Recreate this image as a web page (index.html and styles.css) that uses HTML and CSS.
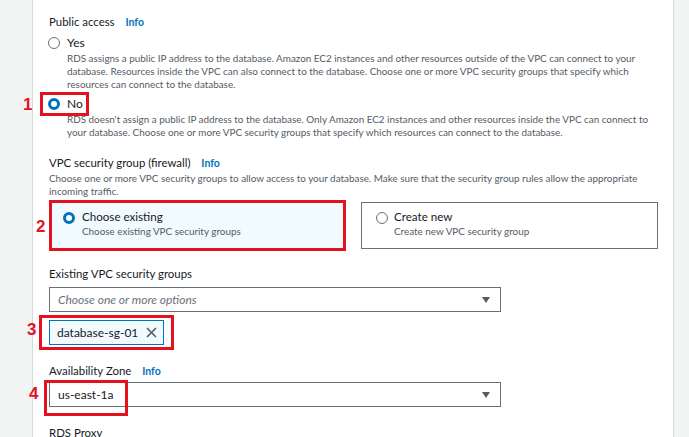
FILE: index.html
```html
<!DOCTYPE html>
<html>
<head>
<meta charset="utf-8">
<link rel="stylesheet" href="styles.css">
</head>
<body>
<div class="page">
  <div class="side-left"></div>
  <main class="panel">
    <section class="field">
      <div class="label">Public access <span class="info">Info</span></div>
      <div class="option option-yes">
        <span class="radio"></span>
        <div class="opt-body">
          <div class="opt-title">Yes</div>
          <div class="desc">
            <span class="line">RDS assigns a public IP address to the database. Amazon EC2 instances and other resources outside of the VPC can connect to your</span>
            <span class="line">database. Resources inside the VPC can also connect to the database. Choose one or more VPC security groups that specify which</span>
            <span class="line">resources can connect to the database.</span>
          </div>
        </div>
      </div>
      <div class="option option-no">
        <span class="anno anno-1">1</span>
        <span class="mark-no"></span>
        <span class="radio checked"></span>
        <div class="opt-body">
          <div class="opt-title">No</div>
          <div class="desc">
            <span class="line">RDS doesn't assign a public IP address to the database. Only Amazon EC2 instances and other resources inside the VPC can connect to</span>
            <span class="line">your database. Choose one or more VPC security groups that specify which resources can connect to the database.</span>
          </div>
        </div>
      </div>
    </section>

    <section class="field field-vpc">
      <div class="label">VPC security group (firewall) <span class="info">Info</span></div>
      <div class="desc field-desc">
        <span class="line">Choose one or more VPC security groups to allow access to your database. Make sure that the security group rules allow the appropriate</span>
        <span class="line">incoming traffic.</span>
      </div>
      <div class="cards">
        <div class="card card-selected">
          <span class="anno anno-2">2</span>
          <span class="radio checked"></span>
          <div class="opt-body">
            <div class="card-title">Choose existing</div>
            <div class="card-sub">Choose existing VPC security groups</div>
          </div>
        </div>
        <div class="card">
          <span class="radio"></span>
          <div class="opt-body">
            <div class="card-title">Create new</div>
            <div class="card-sub">Create new VPC security group</div>
          </div>
        </div>
      </div>
    </section>

    <section class="field field-existing">
      <div class="label">Existing VPC security groups</div>
      <div class="select">
        <span class="placeholder">Choose one or more options</span>
        <span class="caret"></span>
      </div>
      <div class="token-row">
        <span class="anno anno-3">3</span>
        <div class="token">
          <span class="token-text">database-sg-01</span>
          <svg class="token-x" width="11" height="11" viewBox="0 0 11 11"><path d="M1 1 L10 10 M10 1 L1 10" stroke="#545b64" stroke-width="1.6" fill="none"/></svg>
        </div>
      </div>
    </section>

    <section class="field field-az">
      <div class="label">Availability Zone <span class="info">Info</span></div>
      <div class="select select-az">
        <span class="anno anno-4">4</span>
        <span class="value">us-east-1a</span>
        <span class="caret"></span>
      </div>
    </section>

    <section class="field field-proxy">
      <div class="label">RDS Proxy</div>
    </section>
  </main>
  <div class="side-right"></div>
</div>
</body>
</html>
```

FILE: styles.css
```css
* { box-sizing: border-box; }
html, body { margin: 0; padding: 0; }
body {
  width: 689px;
  height: 437px;
  overflow: hidden;
  background: #ffffff;
  font-family: "Lato", "Open Sans", sans-serif;
  color: #16191f;
}
.page {
  display: flex;
  height: 437px;
}
.side-left {
  width: 33px;
  flex: none;
  background: #f2f3f3;
  border-right: 1px solid #d5dbdb;
}
.side-right {
  width: 16px;
  flex: none;
  background: #f2f3f3;
  border-left: 1px solid #d5dbdb;
}
.panel {
  flex: 1;
  padding: 14px 0 0 16px;
  position: relative;
}
.label {
  font-size: 11.4px;
  line-height: 16px;
  color: #16191f;
}
.info {
  color: #0073bb;
  font-weight: 700;
  font-size: 10.5px;
  margin-left: 8px;
}
.desc {
  font-size: 9.9px;
  line-height: 13px;
  color: #545b64;
}
.line { display: block; white-space: nowrap; }

.option {
  display: flex;
  align-items: flex-start;
  position: relative;
}
.option-yes { margin-top: 5px; }
.option-no { margin-top: 5px; }
.radio {
  width: 12px;
  height: 12px;
  flex: none;
  border: 1.5px solid #687078;
  border-radius: 50%;
  margin: 2px 7px 0 -1px;
  background: #fff;
}
.radio.checked {
  border: 3.5px solid #0073bb;
  background: #fff;
}
.opt-title {
  font-size: 12px;
  line-height: 16px;
}
.option .desc { margin-top: 1px; }

.anno {
  position: absolute;
  color: #e3121e;
  font-family: "Liberation Sans", sans-serif;
  font-weight: 700;
  font-size: 17px;
  line-height: 17px;
}
.anno-1 { left: -26px; top: 0px; }
.mark-no {
  position: absolute;
  left: -9px;
  top: -4px;
  width: 49px;
  height: 24px;
  border: 3px solid #e3121e;
}

.field-vpc { margin-top: 16px; }
.field-desc { margin-top: 1px; }
.cards {
  display: flex;
  align-items: center;
  gap: 15px;
  margin-top: 2px;
}
.card {
  position: relative;
  display: flex;
  align-items: flex-start;
  width: 297px;
  height: 47px;
  border: 1px solid #687078;
  padding: 6px 14px;
}
.card .radio { margin: 3px 6px 0 0; }
.card-selected {
  width: 297px;
  height: 51px;
  border: 3px solid #e3121e;
  background: #f1faff;
  padding: 6px 11px;
}
.card-selected .radio { margin-right: 7px; }
.anno-2 { left: -16px; top: 15px; }
.card-title {
  font-size: 11.6px;
  line-height: 16px;
  color: #16191f;
}
.card-sub {
  font-size: 9.9px;
  line-height: 13px;
  color: #545b64;
  margin-top: 0;
}

.field-existing { margin-top: 15px; }
.select {
  position: relative;
  display: flex;
  align-items: center;
  width: 452px;
  height: 25px;
  border: 1px solid #687078;
  padding: 0 8px;
  margin-top: 5px;
  font-size: 12px;
}
.placeholder {
  font-style: italic;
  color: #687078;
  flex: 1;
}
.value { flex: 1; color: #16191f; }
.caret {
  width: 0;
  height: 0;
  border-left: 4.5px solid transparent;
  border-right: 4.5px solid transparent;
  border-top: 6px solid #545b64;
  margin-right: 2px;
}
.token-row {
  position: relative;
  display: flex;
  margin-top: 8px;
}
.token {
  position: relative;
  display: flex;
  align-items: center;
  gap: 8px;
  height: 25px;
  padding: 0 6px 0 7px;
  background: #f1faff;
  border: 1px solid #0073bb;
  font-size: 12px;
}
.token::after {
  content: "";
  position: absolute;
  left: -11px;
  right: -11px;
  top: -6px;
  bottom: -6px;
  border: 3px solid #e3121e;
}
.token-text { color: #16191f; }
.token-x { flex: none; }
.anno-3 { left: -22px; top: 1px; }

.field-az { margin-top: 18px; }
.select-az { margin-top: 3px; }
.select-az::before {
  content: "";
  position: absolute;
  left: -6px;
  top: -3px;
  width: 78px;
  height: 30px;
  border: 3px solid #e3121e;
}
.anno-4 { left: -21px; top: 2px; }

.field-proxy { margin-top: 18px; }
```
